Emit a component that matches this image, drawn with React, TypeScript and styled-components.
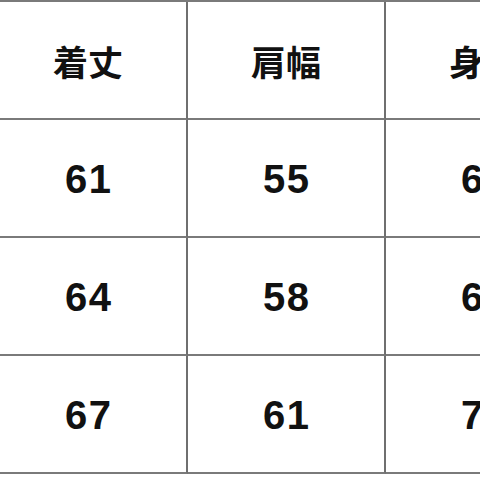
import React from "react";
import styled, { createGlobalStyle } from "styled-components";

const Global = createGlobalStyle`
  html, body {
    margin: 0;
    padding: 0;
    background: #ffffff;
    width: 480px;
    height: 480px;
    overflow: hidden;
  }
`;

const Page = styled.div`
  width: 480px;
  height: 480px;
  overflow: hidden;
  background: #ffffff;
`;

const Table = styled.div`
  display: grid;
  grid-template-columns: repeat(3, 198px);
  grid-auto-rows: 118px;
  margin-left: -12px;
  width: 596px;
  border-top: 2px solid #7a7a7a;
  border-left: 2px solid #7a7a7a;
  box-sizing: border-box;
`;

const Cell = styled.div<{ $head?: boolean }>`
  display: flex;
  align-items: center;
  justify-content: center;
  border-right: 2px solid #6f6f6f;
  border-bottom: 2px solid #7a7a7a;
  color: #111111;
  font-family: ${(p) =>
    p.$head
      ? `"Noto Sans CJK JP", "Noto Sans", sans-serif`
      : `"Liberation Sans", Arial, sans-serif`};
  font-weight: 700;
  font-size: ${(p) => (p.$head ? "35px" : "40px")};
  letter-spacing: ${(p) => (p.$head ? "0px" : "1.5px")};
  text-indent: ${(p) => (p.$head ? "0px" : "1.5px")};
  box-sizing: border-box;
  padding-top: ${(p) => (p.$head ? "0" : "2px")};
`;

const rows = [
  ["着丈", "肩幅", "身幅"],
  ["61", "55", "60"],
  ["64", "58", "63"],
  ["67", "61", "72"],
];

export default function App() {
  return (
    <Page>
      <Global />
      <Table>
        {rows.map((r, i) =>
          r.map((c, j) => (
            <Cell key={`${i}-${j}`} $head={i === 0}>
              {c}
            </Cell>
          ))
        )}
      </Table>
    </Page>
  );
}
